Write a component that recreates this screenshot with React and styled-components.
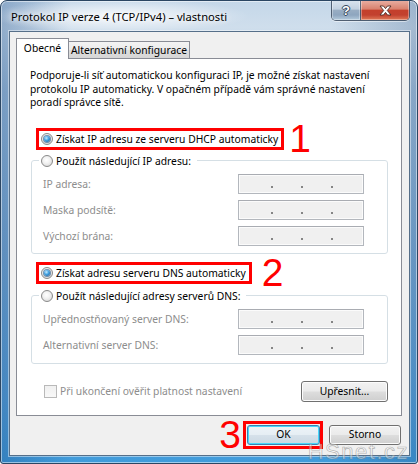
import React from 'react';
import styled, { createGlobalStyle, css } from 'styled-components';

const FONT = `"Noto Sans", "Open Sans", sans-serif`;

const Global = createGlobalStyle`
  html, body { margin: 0; padding: 0; background: #ffffff; }
  body { width: 418px; height: 464px; overflow: hidden; }
  *, *::before, *::after { box-sizing: border-box; }
`;

const Window = styled.div`
  position: relative;
  width: 418px;
  height: 464px;
  display: flex;
  flex-direction: column;
  border: 1px solid #2b4663;
  border-radius: 7px 7px 3px 3px;
  overflow: hidden;
  font-family: ${FONT};
  font-size: 10.3px;
  color: #000;
  box-shadow: inset 0 0 0 1px rgba(255, 255, 255, 0.5);
  background:
    radial-gradient(130px 17px at 118px 15px, rgba(255,255,255,0.85), rgba(255,255,255,0) 100%),
    linear-gradient(90deg, rgba(30,80,140,0.35) 0, rgba(30,80,140,0) 70px, rgba(30,80,140,0) 330px, rgba(30,70,120,0.25) 418px),
    linear-gradient(180deg, #c4d7e9 0, #cfdeec 26px, #a9c5df 90px, #80afd8 250px, #58a3dc 400px, #3f9bdb 464px);
`;

const TitleBar = styled.div`
  flex: none;
  height: 30px;
  display: flex;
  align-items: flex-start;
  padding: 0 7px 0 10px;
`;

const Title = styled.div`
  align-self: center;
  font-size: 11.2px;
  white-space: nowrap;
  text-shadow: 0 0 5px rgba(255,255,255,0.95), 0 0 9px rgba(255,255,255,0.9);
`;

const Captions = styled.div`
  margin-left: auto;
  margin-top: -1px;
  display: flex;
  height: 21px;
  border: 1px solid rgba(40, 55, 75, 0.75);
  border-top: none;
  border-radius: 0 0 5px 5px;
  overflow: hidden;
  box-shadow: 0 1px 0 rgba(255,255,255,0.5);
`;

const CaptionButton = styled.div`
  width: ${p => p.$w}px;
  display: flex;
  align-items: center;
  justify-content: center;
  box-shadow: inset 0 0 0 1px rgba(255,255,255,0.35);
  ${p => p.$close ? css`
    background: linear-gradient(180deg, #e9b1a5 0%, #d9826f 45%, #c4402c 52%, #c2412f 75%, #e07a58 100%);
  ` : css`
    border-right: 1px solid rgba(40, 55, 75, 0.7);
    background: linear-gradient(180deg, #dbe5ef 0%, #c2d1e0 45%, #98adc3 52%, #8ea6bf 75%, #b4cadc 100%);
  `}
`;

const HelpGlyph = styled.span`
  font-family: "Liberation Sans", Arial, sans-serif;
  font-weight: bold;
  font-size: 13px;
  line-height: 1;
  color: #fff;
  margin-top: 1px;
  text-shadow: 0 0 1px #2b3b4f, 1px 0 0 #3a4c62, -1px 0 0 #3a4c62, 0 1px 0 #3a4c62, 0 -1px 0 #3a4c62;
`;

const Client = styled.div`
  flex: 1;
  margin: 0 7px 7px 8px;
  border: 1px solid #566f89;
  box-shadow: 0 0 0 1px rgba(255,255,255,0.45);
  background: #f0f0f0;
  padding: 6px 7px 6px 6px;
  display: flex;
  flex-direction: column;
`;

const TabStrip = styled.div`
  display: flex;
  align-items: flex-end;
  height: 20px;
  flex: none;
`;

const Tab = styled.div`
  position: relative;
  border: 1px solid #898c95;
  border-bottom: none;
  display: flex;
  align-items: center;
  justify-content: center;
  white-space: nowrap;
  ${p => p.$active ? css`
    z-index: 1;
    height: 21px;
    margin-bottom: -1px;
    width: 53px;
    background: #fff;
    padding-bottom: 2px;
  ` : css`
    height: 17px;
    width: 122px;
    margin-left: -1px;
    background: linear-gradient(180deg, #f3f3f3 0%, #ebebeb 50%, #dddddd 51%, #d6d6d6 100%);
  `}
`;

const Panel = styled.div`
  flex: 1;
  background: #fff;
  border: 1px solid #898c95;
  padding: 10px 13px 0 14px;
  display: flex;
  flex-direction: column;
`;

const Intro = styled.p`
  margin: 0 0 0 -1px;
  line-height: 13.5px;
  white-space: nowrap;
`;

const AnnotatedRow = styled.div`
  display: flex;
  align-items: center;
  margin-top: ${p => p.$mt}px;
  margin-left: 5px;
  height: 22px;
`;

const Highlight = styled.div`
  display: flex;
  align-items: center;
  border: 3px solid #ff0000;
  padding: 0 3px 0 2px;
`;

const Mark = styled.span`
  font-family: "Liberation Sans", Arial, sans-serif;
  font-size: 39px;
  line-height: 16px;
  color: #ff0000;
  margin-left: ${p => p.$ml || 0}px;
  margin-right: ${p => p.$mr || 0}px;
`;

const RadioRow = styled.label`
  display: flex;
  align-items: center;
  gap: 3px;
  height: 16px;
  white-space: nowrap;
`;

const RadioDot = styled.span`
  flex: none;
  width: 12px;
  height: 12px;
  border-radius: 50%;
  border: 1px solid #8a8a8a;
  background: radial-gradient(circle at 45% 40%, #ffffff 0%, #f2f2f2 40%, #cfcfcf 100%);
  display: flex;
  align-items: center;
  justify-content: center;
  ${p => p.$checked && css`
    &::after {
      content: '';
      width: 6px;
      height: 6px;
      border-radius: 50%;
      background: radial-gradient(circle at 40% 35%, #c8ecff 0%, #3f9fe0 45%, #174f88 100%);
      box-shadow: 0 0 0 1px rgba(30, 80, 130, 0.6);
    }
  `}
`;

const Group = styled.fieldset`
  margin: ${p => p.$mt}px 0 0 0;
  border: 1px solid #d5dfe5;
  border-radius: 3px;
  padding: 5px 23px ${p => p.$pb}px 11px;
  display: flex;
  flex-direction: column;
  gap: 6px;
  min-width: 0;
`;

const Legend = styled.legend`
  margin-left: -4px;
  padding: 0 6px 0 2px;
  height: 16px;
`;

const FieldRow = styled.div`
  display: flex;
  align-items: center;
  justify-content: space-between;
  height: 20px;
`;

const FieldLabel = styled.span`
  color: #8d8d8d;
  white-space: nowrap;
`;

const IpBox = styled.div`
  width: 126px;
  height: 20px;
  border: 1px solid #b3b7bd;
  border-top-color: #a9acb2;
  background: #f0f0f0;
  box-shadow: inset 0 0 0 1px #fbfbfb;
  display: flex;
  align-items: flex-start;
  padding: 11px 0 0 32px;
  gap: 28px;
`;

const IpDot = styled.i`
  width: 2px;
  height: 2px;
  background: #858585;
`;

const FooterRow = styled.div`
  display: flex;
  align-items: center;
  margin-top: 17px;
  padding: 0 0 0 13px;
`;

const CheckBox = styled.span`
  flex: none;
  width: 13px;
  height: 13px;
  border: 1px solid #b9b9b9;
  background: linear-gradient(180deg, #f0f0f0, #f8f8f8);
  margin-right: 3px;
`;

const DisabledText = styled.span`
  color: #8d8d8d;
  white-space: nowrap;
`;

const Button = styled.button`
  font: inherit;
  color: #000;
  width: ${p => p.$w}px;
  height: ${p => p.$h}px;
  padding: 0 0 1px;
  border-radius: 3px;
  border: 1px solid #707070;
  background: linear-gradient(180deg, #f2f2f2 0%, #ebebeb 48%, #dddddd 52%, #cfcfcf 100%);
  box-shadow: inset 0 0 0 1px #fcfcfc;
  margin-left: ${p => p.$ml || 0}px;
  flex: none;
  ${p => p.$push && css`margin-left: auto;`}
  ${p => p.$default && css`
    border-color: #3c7fb1;
    box-shadow: inset 0 0 0 1px #48d8fb;
    background: linear-gradient(180deg, #eef4f8 0%, #e6eef4 48%, #d6e1ea 52%, #cbd8e3 100%);
  `}
`;

const ButtonBar = styled.div`
  flex: none;
  display: flex;
  align-items: center;
  justify-content: flex-end;
  height: 29px;
  margin-top: 4px;
  padding-right: 1px;
`;

const OkFrame = styled.div`
  display: flex;
  border: 3px solid #ff0000;
  padding: 1px 0 1px 1px;
`;

const Watermark = styled.div`
  position: absolute;
  right: 8px;
  bottom: 0;
  font-family: "Liberation Sans", Arial, sans-serif;
  font-size: 22px;
  line-height: 22px;
  letter-spacing: 1.5px;
  color: rgba(255, 255, 255, 0.45);
  -webkit-text-stroke: 0.7px rgba(110, 110, 110, 0.5);
  pointer-events: none;
`;

function Radio({ checked, children }) {
  return (
    <RadioRow>
      <RadioDot $checked={checked} />
      <span>{children}</span>
    </RadioRow>
  );
}

function IpField() {
  return (
    <IpBox>
      <IpDot />
      <IpDot />
      <IpDot />
    </IpBox>
  );
}

function CloseGlyph() {
  return (
    <svg width="13" height="11" viewBox="0 0 13 11">
      <path
        d="M1 1 H4.5 L6.5 3.6 L8.5 1 H12 L8.3 5.5 L12 10 H8.5 L6.5 7.4 L4.5 10 H1 L4.7 5.5 Z"
        fill="#ffffff"
        stroke="#4a2a24"
        strokeWidth="0.9"
        strokeLinejoin="round"
      />
    </svg>
  );
}

export default function App() {
  return (
    <>
      <Global />
      <Window>
        <TitleBar>
          <Title>Protokol IP verze 4 (TCP/IPv4) – vlastnosti</Title>
          <Captions>
            <CaptionButton $w={29}><HelpGlyph>?</HelpGlyph></CaptionButton>
            <CaptionButton $w={48} $close><CloseGlyph /></CaptionButton>
          </Captions>
        </TitleBar>
        <Client>
          <TabStrip>
            <Tab $active>Obecné</Tab>
            <Tab>Alternativní konfigurace</Tab>
          </TabStrip>
          <Panel>
            <Intro>
              Podporuje-li síť automatickou konfiguraci IP, je možné získat nastavení
              <br />
              protokolu IP automaticky. V opačném případě vám správné nastavení
              <br />
              poradí správce sítě.
            </Intro>

            <AnnotatedRow $mt={18}>
              <Highlight>
                <Radio checked>Získat IP adresu ze serveru DHCP automaticky</Radio>
              </Highlight>
              <Mark $ml={5}>1</Mark>
            </AnnotatedRow>

            <Group $mt={3} $pb={7}>
              <Legend><Radio>Použít následující IP adresu:</Radio></Legend>
              <FieldRow><FieldLabel>IP adresa:</FieldLabel><IpField /></FieldRow>
              <FieldRow><FieldLabel>Maska podsítě:</FieldLabel><IpField /></FieldRow>
              <FieldRow><FieldLabel>Výchozí brána:</FieldLabel><IpField /></FieldRow>
            </Group>

            <AnnotatedRow $mt={8}>
              <Highlight>
                <Radio checked>Získat adresu serveru DNS automaticky</Radio>
              </Highlight>
              <Mark $ml={10}>2</Mark>
            </AnnotatedRow>

            <Group $mt={4} $pb={8}>
              <Legend><Radio>Použít následující adresy serverů DNS:</Radio></Legend>
              <FieldRow><FieldLabel>Upřednostňovaný server DNS:</FieldLabel><IpField /></FieldRow>
              <FieldRow><FieldLabel>Alternativní server DNS:</FieldLabel><IpField /></FieldRow>
            </Group>

            <FooterRow>
              <CheckBox />
              <DisabledText>Při ukončení ověřit platnost nastavení</DisabledText>
              <Button $w={87} $h={21} $push>Upřesnit...</Button>
            </FooterRow>
          </Panel>
          <ButtonBar>
            <Mark $mr={2}>3</Mark>
            <OkFrame>
              <Button $w={73} $h={20} $default>OK</Button>
            </OkFrame>
            <Button $w={72} $h={20} $ml={6}>Storno</Button>
          </ButtonBar>
        </Client>
        <Watermark>HSnet.cz</Watermark>
      </Window>
    </>
  );
}
